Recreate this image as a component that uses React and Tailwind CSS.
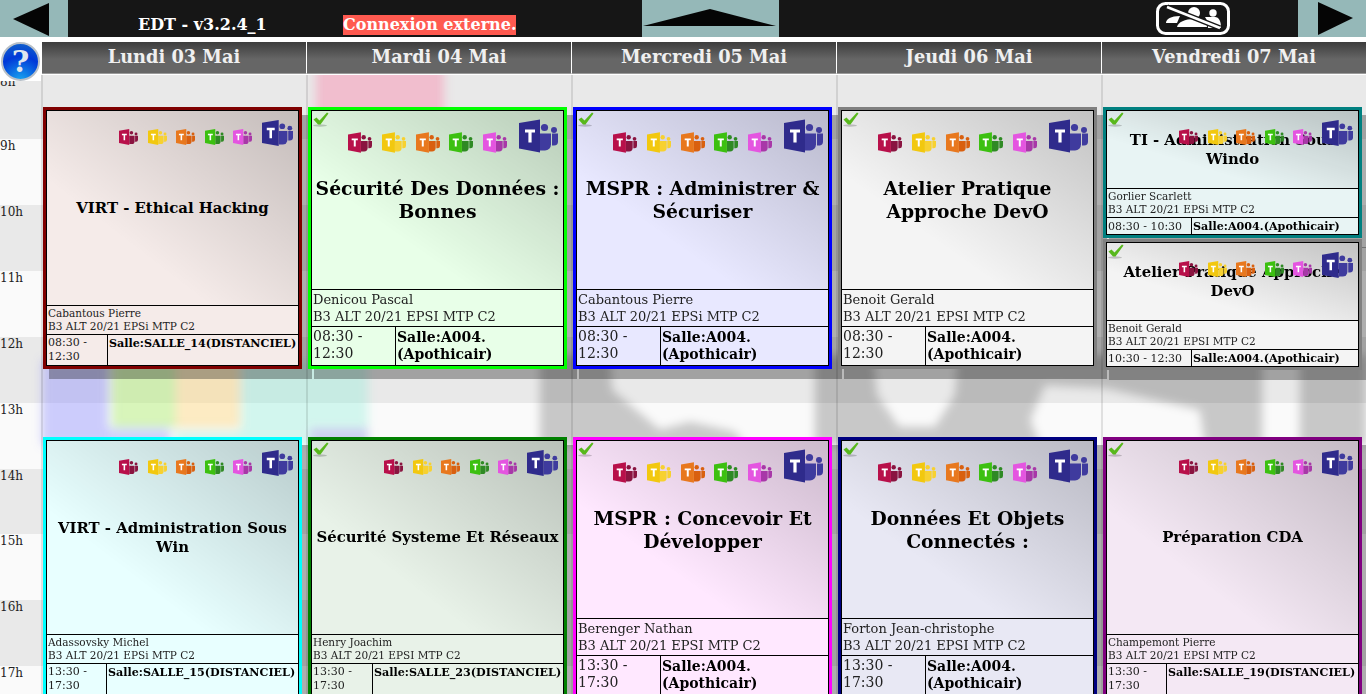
import React from 'react';

const teamColors = [
  ['#b8104a', '#8a1440'],
  ['#f2c80f', '#f7d130'],
  ['#e8781e', '#d9600f'],
  ['#3cc010', '#2f8a24'],
  ['#e455e0', '#a838a8'],
];

function TeamsIcon({ main, body, className }) {
  return (
    <svg viewBox="0 0 39 33" className={className}>
      <circle cx="25.5" cy="8" r="3.6" fill={body} />
      <circle cx="35" cy="10.5" r="3" fill={body} />
      <path d="M33 14h6v8a4 4 0 0 1-4 4h-2z" fill={body} />
      <path d="M21 14h11v11a6 6 0 0 1-6 6h-5z" fill={body} />
      <path d="M0 3.5 21 0v33L0 29z" fill={main} />
      <path d="M6 10h10v3h-3.4v10h-3.2V13H6z" fill="#fff" />
    </svg>
  );
}

function Check() {
  return (
    <svg viewBox="0 0 16 15" className="absolute left-[1px] top-[1px] z-10 h-[15px] w-[16px]">
      <ellipse cx="7" cy="13.5" rx="7" ry="1.2" fill="#00000033" />
      <path d="M0.5 7.5 3.5 5.5 6.5 8.5 14 0.5 15.5 1.5 7.5 12.5h-2.5z" fill="#58b81c" />
    </svg>
  );
}

function Card({ frame, title, name, group, time, salle, big, check, left, height, gap }) {
  const short = left === 'w-[85px]';
  return (
    <div className={`relative shrink-0 border-[3px] ${frame} ${height} ${gap}`}>
      <div className="absolute -bottom-[13px] -right-[13px] left-[3px] top-[5px] -z-10 bg-black/30" />
      <div className="relative flex h-full flex-col border border-black text-black">
        {check && <Check />}
        <div className={`absolute right-[5px] top-[8px] z-10 flex items-start ${big ? 'gap-[9.75px]' : 'gap-[9.6px]'}`}>
          {teamColors.map(([m, b]) => (
            <TeamsIcon key={m} main={m} body={b} className={big ? 'mt-[13px] h-[21px] w-[24px]' : 'mt-[9px] h-[18px] w-[19px]'} />
          ))}
          <TeamsIcon main="#2f2b8c" body="#3f3b9e" className={big ? 'ml-[2.25px] h-[34px] w-[39px]' : 'h-[28px] w-[31px]'} />
        </div>
        <div className="flex min-h-0 flex-1 items-center justify-center bg-[linear-gradient(to_bottom_left,rgba(0,0,0,0.2),rgba(0,0,0,0)_68%)] text-center">
          <div className={`font-bold ${big ? 'text-[18.75px] leading-[23px]' : 'text-[14.88px] leading-[19px]'}`}>{title}</div>
        </div>
        <div className={`border-t border-black px-[1px] text-[#222] ${big ? 'h-[37px] pt-[1px] text-[13px] leading-[17px]' : 'h-[29px] pt-[1px] text-[10.5px] leading-[13px]'}`}>
          <div>{name}</div>
          <div>{group}</div>
        </div>
        <div className={`flex border-t border-black ${big ? 'h-[39px] text-[14px] leading-[17px]' : short ? 'h-[17px] text-[11px] leading-[15px]' : 'h-[31px] text-[11px] leading-[14px]'}`}>
          <div className={`shrink-0 border-r border-black px-[1px] pt-[1px] text-[#222] ${left}`}>{time}</div>
          <div className={`min-w-0 flex-1 px-[1px] font-bold ${short ? 'pt-[1px]' : 'pt-[2px]'} ${big ? '' : 'text-[11.15px]'}`}>{salle}</div>
        </div>
      </div>
    </div>
  );
}

const S = 'B3 ALT 20/21 EPSi MTP C2';
const I = 'B3 ALT 20/21 EPSI MTP C2';
const M = '08:30 - 12:30';
const A = '13:30 - 17:30';
const AP = 'Salle:A004.(Apothicair)';

const columns = [
  { day: 'Lundi 03 Mai', cards: [
    { frame: 'border-[#800000] bg-[#f5ebe9]', title: 'VIRT - Ethical Hacking', name: 'Cabantous Pierre', group: S, time: M, salle: 'Salle:SALLE_14(DISTANCIEL)', left: 'w-[61px]', height: 'h-[262px]', gap: '' },
    { frame: 'border-[#00ffff] bg-[#e8ffff]', title: 'VIRT - Administration Sous Win', name: 'Adassovsky Michel', group: S, time: A, salle: 'Salle:SALLE_15(DISTANCIEL)', left: 'w-[60px]', height: 'h-[261px]', gap: 'mt-[68px]' },
  ] },
  { day: 'Mardi 04 Mai', cards: [
    { frame: 'border-[#00ff00] bg-[#e8ffe8]', title: 'Sécurité Des Données : Bonnes', name: 'Denicou Pascal', group: I, time: M, salle: AP, big: true, check: true, left: 'w-[84px]', height: 'h-[262px]', gap: '' },
    { frame: 'border-[#008000] bg-[#e8f2e8]', title: 'Sécurité Systeme Et Réseaux', name: 'Henry Joachim', group: I, time: A, salle: 'Salle:SALLE_23(DISTANCIEL)', check: true, left: 'w-[61px]', height: 'h-[261px]', gap: 'mt-[68px]' },
  ] },
  { day: 'Mercredi 05 Mai', cards: [
    { frame: 'border-[#0000ff] bg-[#e8e8ff]', title: 'MSPR : Administrer & Sécuriser', name: 'Cabantous Pierre', group: S, time: M, salle: AP, big: true, check: true, left: 'w-[84px]', height: 'h-[262px]', gap: '' },
    { frame: 'border-[#ff00ff] bg-[#ffe8ff]', title: 'MSPR : Concevoir Et Développer', name: 'Berenger Nathan', group: I, time: A, salle: AP, big: true, check: true, left: 'w-[84px]', height: 'h-[261px]', gap: 'mt-[68px]' },
  ] },
  { day: 'Jeudi 06 Mai', cards: [
    { frame: 'border-[#808080] bg-[#f4f4f4]', title: 'Atelier Pratique Approche DevO', name: 'Benoit Gerald', group: I, time: M, salle: AP, big: true, check: true, left: 'w-[84px]', height: 'h-[262px]', gap: '' },
    { frame: 'border-[#000080] bg-[#e8e8f4]', title: 'Données Et Objets Connectés :', name: 'Forton Jean-christophe', group: I, time: A, salle: AP, big: true, check: true, left: 'w-[84px]', height: 'h-[261px]', gap: 'mt-[68px]' },
  ] },
  { day: 'Vendredi 07 Mai', cards: [
    { frame: 'border-[#008080] bg-[#e8f4f4]', title: 'TI - Administration Sous Windo', name: 'Gorlier Scarlett', group: S, time: '08:30 - 10:30', salle: AP, check: true, left: 'w-[85px]', height: 'h-[131px]', gap: '' },
    { frame: 'border-[#808080] bg-[#f4f4f4]', title: 'Atelier Pratique Approche DevO', name: 'Benoit Gerald', group: I, time: '10:30 - 12:30', salle: AP, check: true, left: 'w-[85px]', height: 'h-[131px]', gap: 'mt-[1px]' },
    { frame: 'border-[#800080] bg-[#f4e8f4]', title: 'Préparation CDA', name: 'Champemont Pierre', group: I, time: A, salle: 'Salle:SALLE_19(DISTANCIEL)', check: true, left: 'w-[60px]', height: 'h-[261px]', gap: 'mt-[67px]' },
  ] },
];

const hours = ['8h', '9h', '10h', '11h', '12h', '13h', '14h', '15h', '16h', '17h'];

function Watermark() {
  return (
    <svg viewBox="0 75 1366 619" className="absolute inset-0 h-full w-full">
      <defs>
        <filter id="wm" x="-20%" y="-20%" width="140%" height="140%">
          <feGaussianBlur stdDeviation="5" />
        </filter>
      </defs>
      <g filter="url(#wm)">
        <rect x="316" y="60" width="128" height="60" fill="#ff6f9f" opacity="0.36" />
        <rect x="42" y="360" width="66" height="85" fill="#8888ff" opacity="0.4" />
        <rect x="108" y="428" width="62" height="20" fill="#8888ff" opacity="0.35" />
        <rect x="112" y="360" width="64" height="68" fill="#b6f07a" opacity="0.5" />
        <rect x="176" y="360" width="64" height="68" fill="#ffdc8c" opacity="0.5" />
        <rect x="240" y="360" width="128" height="85" fill="#80f0d8" opacity="0.32" />
        <rect x="176" y="430" width="64" height="20" fill="#80f0d8" opacity="0.3" />
        <rect x="310" y="428" width="58" height="20" fill="#c090f0" opacity="0.38" />
        <g fill="#000" opacity="0.2">
          <path d="M540 355H610L612 390 660 430 690 422 735 432 745 445H540Z" />
          <path d="M815 355H873L877 395 899 427H935L955 395 958 355H1262V445H1205L1200 410 1105 388 1045 385 1030 420 1040 445H815Z" />
          <path d="M1300 355h66v90h-66z" />
        </g>
      </g>
    </svg>
  );
}

export default function App() {
  return (
    <div className="flex h-[694px] w-[1366px] flex-col overflow-hidden bg-white font-['DejaVu_Serif',serif]">
      <div className="flex h-[37px] shrink-0 items-stretch bg-[#161616] text-white">
        <div className="w-[68px] bg-[#95b8b8]">
          <svg viewBox="0 0 68 37" className="h-[37px] w-[68px]"><path d="M13 19 49 3v33z" fill="#050505" /></svg>
        </div>
        <div className="flex w-[574px] items-center pt-[13px] text-[16px] font-bold leading-[20px]">
          <span className="ml-[70px] w-[205px]">EDT - v3.2.4_1</span>
          <span className="bg-[#ff5a50]">Connexion externe.</span>
        </div>
        <div className="w-[137px] bg-[#95b8b8]">
          <svg viewBox="0 0 137 37" className="h-[37px] w-[137px]"><path d="M68 9 1 26h133z" fill="#050505" /></svg>
        </div>
        <div className="flex w-[519px] items-center pl-[377px]">
          <svg viewBox="0 0 74 33" className="h-[33px] w-[74px]">
            <rect x="1.5" y="1.5" width="71" height="30" rx="8" fill="#161616" stroke="#fff" strokeWidth="3" />
            <circle cx="38" cy="11" r="6" fill="#fff" />
            <path d="M21 25c1-5 8-8 17-8s13 3 13 8z" fill="#fff" />
            <circle cx="57" cy="11" r="3.7" fill="#fff" />
            <path d="M49 15h10c4 0 6 4 6 11H52c0-5-1-8-3-11z" fill="#fff" />
            <path d="M10 21c0-4 5-7 14-7l-3 7z" fill="#fff" />
            <path d="M11 5 64 26" stroke="#161616" strokeWidth="5.5" />
            <path d="M11 5 64 26" stroke="#fff" strokeWidth="2.5" />
          </svg>
        </div>
        <div className="w-[68px] bg-[#95b8b8]">
          <svg viewBox="0 0 68 37" className="h-[37px] w-[68px]"><path d="M20 2 55 18 20 35z" fill="#050505" /></svg>
        </div>
      </div>

      <div className="relative mt-[5px] flex h-[33px] shrink-0 border-b border-white">
        <div className="absolute left-0 top-0 z-20 flex h-[39px] w-[41px] items-center justify-center bg-white">
          <div className="flex h-[39px] w-[39px] items-center justify-center rounded-full border-2 border-[#b8c0c8] bg-[radial-gradient(circle_at_50%_105%,#18a8f0,#0038d8_60%,#1468c8)] text-[30px] font-bold leading-none text-[#dfe6ee]">?</div>
        </div>
        <div className="w-[42px] shrink-0" />
        {columns.map((c) => (
          <div key={c.day} className="flex h-[32px] w-[265px] shrink-0 items-center justify-center border-b border-r border-b-[#9a9a9a] border-r-white bg-[linear-gradient(to_bottom,#3c3c3c,#666666_55%,#666666)] text-[17.8px] font-bold text-[#f0f0f0]">
            {c.day}
          </div>
        ))}
      </div>

      <div className="relative min-h-0 flex-1">
        <div className="absolute inset-0 flex flex-col text-[12px] text-[#222]">
          {hours.map((h, i) => (
            <div key={h} className={`shrink-0 leading-[14px] ${i === 0 ? 'h-[64.125px]' : 'h-[65.875px]'} ${i % 2 === 0 ? 'bg-[#e9e9e9]' : 'bg-[#fafafa]'}`}>{h}</div>
          ))}
        </div>
        <Watermark />
        <div className="relative z-0 ml-[41px] flex h-full">
          {columns.map((c) => (
            <div key={c.day} className="flex w-[265px] shrink-0 flex-col border-l-2 border-black/10 pt-[32px]">
              <div className="w-[259px]">
                {c.cards.map((card) => (
                  <Card key={card.title + card.time} {...card} />
                ))}
              </div>
            </div>
          ))}
        </div>
      </div>
    </div>
  );
}
